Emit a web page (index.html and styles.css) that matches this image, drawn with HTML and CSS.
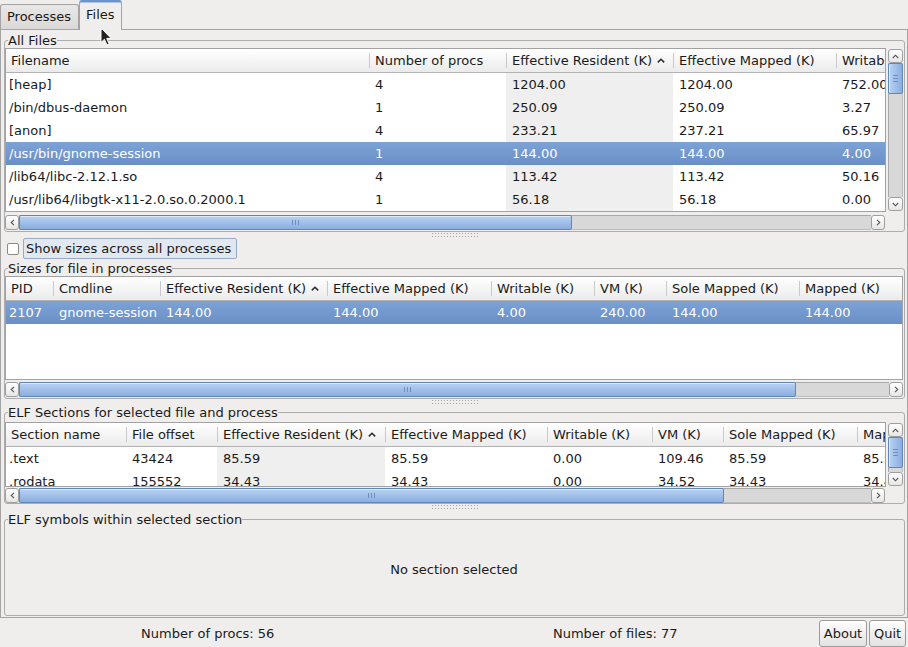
FILE: index.html
```html
<!DOCTYPE html>
<html>
<head>
<meta charset="utf-8">
<title>Files</title>
<link rel="stylesheet" href="styles.css">
</head>
<body>
<div class="tabbar">
  <div class="tab">Processes</div>
  <div class="tab active">Files</div>
</div>
<div class="pane">
  <fieldset class="group g1">
    <legend>All Files</legend>
    <div class="tv">
      <div class="viewport vp1">
        <div class="hdr cols1">
          <div class="hc">Filename</div>
          <div class="hc">Number of procs</div>
          <div class="hc">Effective Resident (K)<svg class="sort" width="8" height="5" viewBox="0 0 8 5"><polyline points="0.8,4.4 4,1.2 7.2,4.4" fill="none" stroke="#2b2b2b" stroke-width="1.5"/></svg></div>
          <div class="hc">Effective Mapped (K)</div>
          <div class="hc">Writable (K)</div>
        </div>
        <div class="row cols1"><div class="c">[heap]</div><div class="c">4</div><div class="c s">1204.00</div><div class="c">1204.00</div><div class="c">752.00</div></div>
        <div class="row cols1"><div class="c">/bin/dbus-daemon</div><div class="c">1</div><div class="c s">250.09</div><div class="c">250.09</div><div class="c">3.27</div></div>
        <div class="row cols1"><div class="c">[anon]</div><div class="c">4</div><div class="c s">233.21</div><div class="c">237.21</div><div class="c">65.97</div></div>
        <div class="row cols1 sel"><div class="c">/usr/bin/gnome-session</div><div class="c">1</div><div class="c s">144.00</div><div class="c">144.00</div><div class="c">4.00</div></div>
        <div class="row cols1"><div class="c">/lib64/libc-2.12.1.so</div><div class="c">4</div><div class="c s">113.42</div><div class="c">113.42</div><div class="c">50.16</div></div>
        <div class="row cols1"><div class="c">/usr/lib64/libgtk-x11-2.0.so.0.2000.1</div><div class="c">1</div><div class="c s">56.18</div><div class="c">56.18</div><div class="c">0.00</div></div>
      </div>
      <div class="vs vs1">
        <div class="sbtn"><svg width="7" height="5" viewBox="0 0 7 5"><polyline points="0.8,4 3.5,1.2 6.2,4" fill="none" stroke="#555" stroke-width="1.1"/></svg></div>
        <div class="vtrack"><div class="vthumb"><svg width="5" height="7" viewBox="0 0 5 7"><path d="M0 0.5H5M0 3.5H5M0 6.5H5" stroke="#6c8dbf" stroke-width="1"/></svg></div></div>
        <div class="sbtn"><svg width="7" height="5" viewBox="0 0 7 5"><polyline points="0.8,1 3.5,3.8 6.2,1" fill="none" stroke="#555" stroke-width="1.1"/></svg></div>
      </div>
    </div>
    <div class="hs hs-short">
      <div class="sbtn"><svg width="5" height="7" viewBox="0 0 5 7"><polyline points="4,0.8 1.2,3.5 4,6.2" fill="none" stroke="#555" stroke-width="1.1"/></svg></div>
      <div class="htrack"><div class="hthumb" style="width:553px"><svg width="7" height="5" viewBox="0 0 7 5"><path d="M0.5 0V5M3.5 0V5M6.5 0V5" stroke="#6c8dbf" stroke-width="1"/></svg></div></div>
      <div class="sbtn"><svg width="5" height="7" viewBox="0 0 5 7"><polyline points="1,0.8 3.8,3.5 1,6.2" fill="none" stroke="#555" stroke-width="1.1"/></svg></div>
    </div>
  </fieldset>

  <div class="splitter"><div class="dots"></div></div>

  <div class="checkrow">
    <span class="cb"></span>
    <span class="cblabel">Show sizes across all processes</span>
  </div>

  <fieldset class="group g2">
    <legend>Sizes for file in processes</legend>
    <div class="viewport vp2">
      <div class="hdr cols2">
        <div class="hc">PID</div>
        <div class="hc">Cmdline</div>
        <div class="hc">Effective Resident (K)<svg class="sort" width="8" height="5" viewBox="0 0 8 5"><polyline points="0.8,4.4 4,1.2 7.2,4.4" fill="none" stroke="#2b2b2b" stroke-width="1.5"/></svg></div>
        <div class="hc">Effective Mapped (K)</div>
        <div class="hc">Writable (K)</div>
        <div class="hc">VM (K)</div>
        <div class="hc">Sole Mapped (K)</div>
        <div class="hc">Mapped (K)</div>
      </div>
      <div class="row cols2 sel"><div class="c">2107</div><div class="c">gnome-session</div><div class="c s">144.00</div><div class="c">144.00</div><div class="c">4.00</div><div class="c">240.00</div><div class="c">144.00</div><div class="c">144.00</div></div>
    </div>
    <div class="hs">
      <div class="sbtn"><svg width="5" height="7" viewBox="0 0 5 7"><polyline points="4,0.8 1.2,3.5 4,6.2" fill="none" stroke="#555" stroke-width="1.1"/></svg></div>
      <div class="htrack"><div class="hthumb" style="width:777px"><svg width="7" height="5" viewBox="0 0 7 5"><path d="M0.5 0V5M3.5 0V5M6.5 0V5" stroke="#6c8dbf" stroke-width="1"/></svg></div></div>
      <div class="sbtn"><svg width="5" height="7" viewBox="0 0 5 7"><polyline points="1,0.8 3.8,3.5 1,6.2" fill="none" stroke="#555" stroke-width="1.1"/></svg></div>
    </div>
  </fieldset>

  <div class="splitter"><div class="dots"></div></div>

  <fieldset class="group g3">
    <legend>ELF Sections for selected file and process</legend>
    <div class="tv">
      <div class="viewport vp3">
        <div class="hdr cols3">
          <div class="hc">Section name</div>
          <div class="hc">File offset</div>
          <div class="hc">Effective Resident (K)<svg class="sort" width="8" height="5" viewBox="0 0 8 5"><polyline points="0.8,4.4 4,1.2 7.2,4.4" fill="none" stroke="#2b2b2b" stroke-width="1.5"/></svg></div>
          <div class="hc">Effective Mapped (K)</div>
          <div class="hc">Writable (K)</div>
          <div class="hc">VM (K)</div>
          <div class="hc">Sole Mapped (K)</div>
          <div class="hc">Mapped (K)</div>
        </div>
        <div class="row cols3"><div class="c">.text</div><div class="c">43424</div><div class="c s">85.59</div><div class="c">85.59</div><div class="c">0.00</div><div class="c">109.46</div><div class="c">85.59</div><div class="c">85.59</div></div>
        <div class="row cols3"><div class="c">.rodata</div><div class="c">155552</div><div class="c s">34.43</div><div class="c">34.43</div><div class="c">0.00</div><div class="c">34.52</div><div class="c">34.43</div><div class="c">34.43</div></div>
      </div>
      <div class="vs vs3">
        <div class="sbtn"><svg width="7" height="5" viewBox="0 0 7 5"><polyline points="0.8,4 3.5,1.2 6.2,4" fill="none" stroke="#555" stroke-width="1.1"/></svg></div>
        <div class="vtrack"><div class="vthumb"><svg width="5" height="7" viewBox="0 0 5 7"><path d="M0 0.5H5M0 3.5H5M0 6.5H5" stroke="#6c8dbf" stroke-width="1"/></svg></div></div>
        <div class="sbtn"><svg width="7" height="5" viewBox="0 0 7 5"><polyline points="0.8,1 3.5,3.8 6.2,1" fill="none" stroke="#555" stroke-width="1.1"/></svg></div>
      </div>
    </div>
    <div class="hs hs-short">
      <div class="sbtn"><svg width="5" height="7" viewBox="0 0 5 7"><polyline points="4,0.8 1.2,3.5 4,6.2" fill="none" stroke="#555" stroke-width="1.1"/></svg></div>
      <div class="htrack"><div class="hthumb" style="width:705px"><svg width="7" height="5" viewBox="0 0 7 5"><path d="M0.5 0V5M3.5 0V5M6.5 0V5" stroke="#6c8dbf" stroke-width="1"/></svg></div></div>
      <div class="sbtn"><svg width="5" height="7" viewBox="0 0 5 7"><polyline points="1,0.8 3.8,3.5 1,6.2" fill="none" stroke="#555" stroke-width="1.1"/></svg></div>
    </div>
  </fieldset>

  <div class="splitter sp3"><div class="dots"></div></div>

  <fieldset class="group g4">
    <legend>ELF symbols within selected section</legend>
    <div class="empty">No section selected</div>
  </fieldset>
</div>

<div class="status">
  <div class="stat">Number of procs: 56</div>
  <div class="stat">Number of files: 77</div>
  <div class="pbtn about">About</div>
  <div class="pbtn quit">Quit</div>
</div>

<svg class="cursor" width="13" height="19" viewBox="0 0 13 19"><path d="M1 1V15.5L4.4 12.3L7 18L9.2 17L6.7 11.4H11.2Z" fill="#222" stroke="#fff" stroke-width="1" stroke-linejoin="round"/></svg>
</body>
</html>
```

FILE: styles.css
```css
* { box-sizing: border-box; }
html, body { margin: 0; padding: 0; }
body {
  width: 908px;
  height: 647px;
  overflow: hidden;
  position: relative;
  background: #efeeed;
  font-family: "DejaVu Sans", sans-serif;
  font-size: 13px;
  color: #1a1a1a;
}

/* tabs */
.tabbar { height: 29px; display: flex; align-items: flex-end; }
.tab {
  width: 79px;
  height: 25px;
  padding-left: 6px;
  line-height: 23px;
  border: 1px solid #a4a4a4;
  border-bottom: none;
  border-radius: 3px 3px 0 0;
  background: linear-gradient(#e9e8e6, #dad9d7);
  white-space: nowrap;
}
.tab.active {
  width: 43px;
  height: 30px;
  margin-bottom: -1px;
  position: relative;
  z-index: 1;
  line-height: 25px;
  border-top: 2px solid #6b92c9;
  box-shadow: inset 0 1px #aac5ea;
  background: #efeeed;
}

/* main pane */
.pane {
  height: 589px;
  border: 1px solid #a4a4a4;
  padding: 3px 2px 1px 3px;
  display: flex;
  flex-direction: column;
}

/* group boxes */
.group {
  margin: 0;
  padding: 0 1px 1px 0;
  border: 1px solid #adadad;
  border-radius: 3px;
  min-width: 0;
  flex: none;
}
.group legend {
  padding: 0;
  margin-left: 3px;
  line-height: 15px;
  height: 15px;
}
.g3 { padding-top: 2px; padding-bottom: 0; }
.g4 { flex: 1; display: flex; }
.empty { flex: 1; display: flex; align-items: center; justify-content: center; padding-bottom: 2px; }

/* table view */
.tv { display: flex; align-items: flex-start; }
.viewport {
  flex: 1;
  min-width: 0;
  border: 1px solid #a2a2a2;
  background: #fff;
  overflow: hidden;
}
.vp1 { height: 164px; }
.vp2 { height: 104px; }
.vp3 { height: 65px; }

.cols1 { grid-template-columns: 363px 137px 167px 163px 120px; }
.cols2 { grid-template-columns: 47px 107px 167px 164px 103px 72px 133px 120px; }
.cols3 { grid-template-columns: 120px 91px 168px 162px 105px 71px 134px 120px; }

.hdr {
  display: grid;
  width: max-content;
  min-width: 100%;
  height: 24px;
  border-bottom: 1px solid #b3b3b3;
  background: linear-gradient(#ffffff, #ebebeb);
}
.hc {
  display: flex;
  align-items: center;
  padding-left: 6px;
  white-space: nowrap;
  overflow: hidden;
  background: linear-gradient(#c9c9c9, #c9c9c9) left center / 1px 15px no-repeat;
}
.hc:first-child { padding-left: 5px; background: none; }
.sort { margin-left: 5px; flex: none; }

.row {
  display: grid;
  width: max-content;
  min-width: 100%;
  height: 23px;
  line-height: 23px;
}
.c { padding-left: 6px; white-space: nowrap; overflow: hidden; }
.c:first-child { padding-left: 3px; }
.c.s { background: #efefef; }
.row.sel { background: linear-gradient(#7da2d6, #6a8fc6); color: #fff; }
.row.sel .c.s { background: transparent; }

/* scrollbars */
.sbtn {
  flex: none;
  width: 14px;
  height: 15px;
  border: 1px solid #9e9e9e;
  border-radius: 3px;
  background: linear-gradient(#ffffff, #e6e6e6);
  display: flex;
  align-items: center;
  justify-content: center;
}
.hs { display: flex; height: 15px; margin-top: 2px; }
.hs-short { margin-right: 18px; margin-top: 3px; }
.g3 .hs-short { margin-top: 1px; }
.htrack {
  flex: 1;
  display: flex;
  background: #d8d8d8;
  box-shadow: inset 0 1px #a9a9a9, inset 0 -1px #bcbcbc;
}
.hthumb {
  height: 15px;
  border: 1px solid #5f86be;
  border-radius: 2px;
  background: linear-gradient(#b9d2f3, #8aaedf);
  box-shadow: inset 0 1px rgba(255,255,255,0.55);
  display: flex;
  align-items: center;
  justify-content: center;
}

.vs { flex: none; width: 15px; margin-left: 2px; margin-top: 1px; display: flex; flex-direction: column; }
.vs1 { height: 162px; }
.vs3 { height: 63px; }
.vs .sbtn { width: 15px; height: 14px; }
.vtrack {
  flex: 1;
  background: #d8d8d8;
  box-shadow: inset 1px 0 #a9a9a9, inset -1px 0 #bcbcbc;
}
.vthumb {
  height: 31px;
  border: 1px solid #5f86be;
  border-radius: 2px;
  background: linear-gradient(90deg, #b9d2f3, #8aaedf);
  box-shadow: inset 1px 0 rgba(255,255,255,0.55);
  display: flex;
  align-items: center;
  justify-content: center;
}

/* splitter handles */
.splitter { height: 6px; flex: none; display: flex; justify-content: center; }
.sp3 { height: 8px; }
.dots {
  width: 46px;
  height: 4px;
  margin-top: 1px;
  background:
    linear-gradient(90deg, #a3a3a3 1px, transparent 1px) 0 0 / 3px 1px repeat-x,
    linear-gradient(90deg, #a3a3a3 1px, transparent 1px) 0 3px / 3px 1px repeat-x;
}

/* checkbox row */
.checkrow { height: 21px; flex: none; display: flex; align-items: center; margin-bottom: 2px; }
.cb {
  width: 12px;
  height: 12px;
  margin-left: 3px;
  margin-top: 1px;
  border: 1px solid #8a8a8a;
  border-radius: 2px;
  background: #fff;
}
.cblabel {
  margin-left: 4px;
  width: 214px;
  height: 21px;
  line-height: 19px;
  padding-left: 2px;
  border: 1px solid #97abc8;
  border-radius: 2px;
  background: #e2e8f0;
  white-space: nowrap;
}

/* status bar */
.status { height: 30px; display: flex; align-items: center; padding: 0 2px 0 4px; }
.stat { flex: 1; text-align: center; }
.pbtn {
  height: 27px;
  line-height: 25px;
  text-align: center;
  border: 1px solid #9b9b9b;
  border-radius: 3px;
  background: linear-gradient(#fdfdfd, #e3e3e3);
}
.about { width: 48px; }
.quit { width: 37px; margin-left: 2px; }

.cursor { position: absolute; left: 100px; top: 27px; }
```
